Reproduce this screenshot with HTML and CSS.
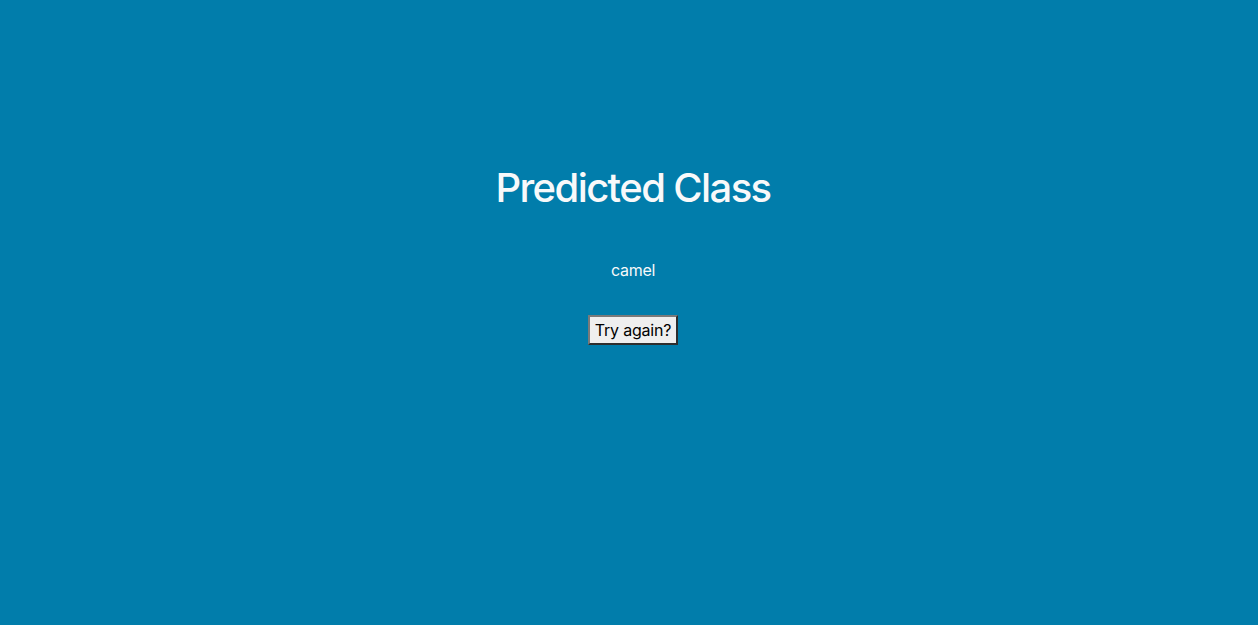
FILE: index.html
```html
<!DOCTYPE html>
<html lang="en">
<head>
<meta charset="utf-8">
<title>Predicted Class</title>
<link rel="stylesheet" href="styles.css">
</head>
<body>
<main class="page">
  <h1 class="title">Predicted Class</h1>
  <p class="result">camel</p>
  <button class="retry" type="button">Try again?</button>
</main>
</body>
</html>
```
FILE: styles.css
```css
html, body {
  margin: 0;
  padding: 0;
  height: 100%;
}
body {
  background: #017dab;
  font-family: Inter, "Noto Sans", "Liberation Sans", sans-serif;
  color: #f8f9fa;
}
.page {
  display: flex;
  flex-direction: column;
  align-items: center;
  padding-top: 164px;
  padding-left: 8px;
}
.title {
  margin: 0;
  font-size: 40px;
  font-weight: 500;
  line-height: 48px;
  letter-spacing: -1.6px;
}
.result {
  margin: 46px 0 0;
  font-size: 16px;
  line-height: 24px;
  letter-spacing: -0.3px;
}
.retry {
  margin-top: 33px;
  font-family: Inter, "Noto Sans", "Liberation Sans", sans-serif;
  font-size: 16px;
  line-height: 20px;
  letter-spacing: -0.2px;
  color: #000;
  background: #efefef;
  border-style: solid;
  border-width: 2px;
  border-color: #7a7a7a #2e2e2e #2e2e2e #7a7a7a;
  border-radius: 0;
  padding: 3px 5px;
}
```
